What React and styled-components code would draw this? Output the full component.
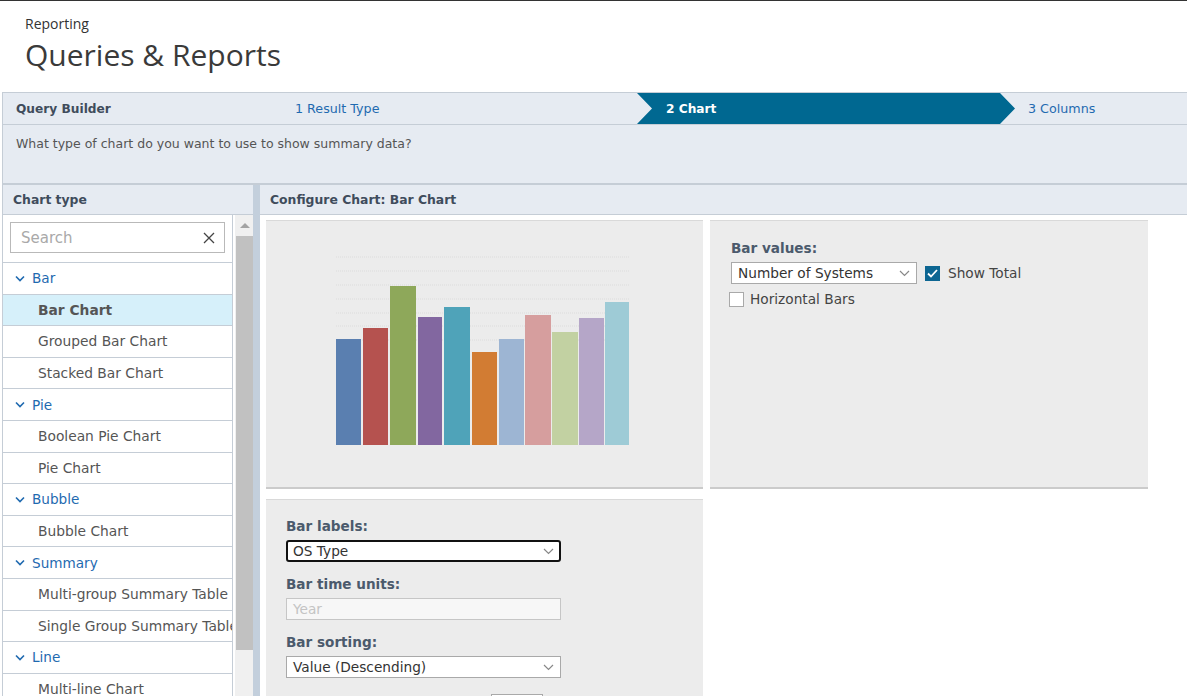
import React from "react"
import styled, { createGlobalStyle } from "styled-components"

const Global = createGlobalStyle`
  html, body { margin: 0; padding: 0; background: #fff; }
  body {
    font-family: "DejaVu Sans", Verdana, sans-serif;
    color: #444;
    overflow: hidden;
  }
  * { box-sizing: border-box; }
`

const Page = styled.div`
  width: 1187px;
  height: 696px;
  border-top: 1px solid #333;
  overflow: hidden;
`

const Header = styled.header`
  height: 91px;
  padding: 14px 0 0 25px;
  font-family: "Open Sans", sans-serif;
  color: #333;
`

const Crumb = styled.div`
  font-size: 14px;
  line-height: 18px;
`

const Title = styled.h1`
  margin: 2px 0 0;
  font-size: 30px;
  font-weight: 400;
  line-height: 40px;
  color: #3a3a3a;
`

const Builder = styled.div`
  margin-left: 2px;
  border-left: 1px solid #c5cdd6;
`

const Steps = styled.div`
  display: flex;
  height: 33px;
  background: #e6ebf2;
  border-top: 1px solid #c5cdd6;
  border-bottom: 1px solid #c5cdd6;
`

const Step = styled.div`
  flex: none;
  width: ${p => p.w}px;
  display: flex;
  align-items: center;
  padding-left: ${p => p.pl}px;
  color: ${p => (p.head ? "#3f4c5c" : p.active ? "#fff" : "#1f6ab0")};
  font-weight: ${p => (p.head || p.active ? 700 : 400)};
  font-size: ${p => (p.head || p.active ? 12.2 : 12.7)}px;
  background: ${p => (p.active ? "#006891" : "transparent")};
  clip-path: ${p =>
    p.active
      ? "polygon(0 0, calc(100% - 15px) 0, 100% 50%, calc(100% - 15px) 100%, 0 100%, 15px 50%)"
      : "none"};
`

const Question = styled.div`
  height: 60px;
  background: #e6ebf2;
  padding: 11px 0 0 13px;
  font-size: 12.5px;
  color: #555;
  border-bottom: 2px solid #c5cdd6;
`

const Split = styled.div`
  display: flex;
  height: 512px;
`

const LeftPane = styled.div`
  width: 250px;
  flex: none;
  display: flex;
  flex-direction: column;
`

const Splitter = styled.div`
  width: 7px;
  flex: none;
  background: #c3cfdc;
`

const RightPane = styled.div`
  flex: 1;
  display: flex;
  flex-direction: column;
`

const PaneTitle = styled.div`
  height: 30px;
  flex: none;
  background: #e6ebf2;
  border-bottom: 1px solid #c5cdd6;
  display: flex;
  align-items: center;
  padding-left: ${p => p.pl}px;
  font-size: 12.4px;
  font-weight: 700;
  color: #3f4c5c;
`

const ListArea = styled.div`
  flex: 1;
  display: flex;
  min-height: 0;
`

const ListCol = styled.div`
  width: 230px;
  flex: none;
  border-right: 1px solid #c5cdd6;
`

const SearchRow = styled.div`
  height: 48px;
  padding: 7px 0 0 7px;
  border-bottom: 1px solid #c5cdd6;
`

const SearchBox = styled.div`
  width: 215px;
  height: 31px;
  border: 1px solid #b9b9b9;
  display: flex;
  align-items: center;
  justify-content: space-between;
  padding: 0 9px 0 10px;
  font-size: 15px;
  color: #a9a9a9;
`

const Row = styled.div`
  height: 31.6px;
  border-bottom: 1px solid #c5cdd6;
  display: flex;
  align-items: center;
  gap: 7px;
  padding-left: ${p => (p.group ? 12 : 35)}px;
  font-size: ${p => (p.group ? 13.6 : 13.8)}px;
  white-space: nowrap;
  overflow: hidden;
  background: ${p => (p.sel ? "#d6f0fa" : "#fff")};
  color: ${p => (p.group ? "#1f6ab0" : "#555")};
  font-weight: ${p => (p.sel ? 700 : 400)};
`

const Scroll = styled.div`
  width: 19px;
  flex: none;
  background: #f0f0f0;
  display: flex;
  flex-direction: column;
  align-items: center;
  margin-left: 2px;
`

const ScrollArrow = styled.div`
  height: 21px;
  display: flex;
  align-items: center;
  &::before {
    content: "";
    border-left: 5px solid transparent;
    border-right: 5px solid transparent;
    border-bottom: 5px solid #a3a3a3;
  }
`

const Thumb = styled.div`
  width: 17px;
  height: 414px;
  background: #c1c1c1;
`

const Cards = styled.div`
  display: grid;
  grid-template-columns: 437px 438px;
  grid-auto-rows: 269px;
  column-gap: 7px;
  row-gap: 10px;
  padding: 5px 0 0 6px;
`

const Card = styled.div`
  background: #ececec;
  border-top: 1px solid #d9d9d9;
  border-bottom: 2px solid #cbcbcb;
  padding: ${p => p.pad || "0"};
`

const Label = styled.div`
  font-size: 13.6px;
  font-weight: 700;
  color: #4b5a6c;
  margin: ${p => p.mt || 0}px 0 6px;
`

const Select = styled.div`
  width: ${p => p.w}px;
  height: 22px;
  background: ${p => (p.disabled ? "#f7f7f7" : "#fff")};
  border: ${p => (p.focus ? "2px solid #111" : "1px solid #a9a9a9")};
  border-color: ${p => (p.disabled ? "#c6c6c6" : undefined)};
  border-radius: ${p => (p.focus ? 3 : 0)}px;
  display: flex;
  align-items: center;
  justify-content: space-between;
  padding: 0 ${p => (p.focus ? 5 : 6)}px;
  font-size: 13.7px;
  color: ${p => (p.disabled ? "#c4c4c4" : "#333")};
`

const InlineRow = styled.div`
  display: flex;
  align-items: center;
  gap: ${p => p.gap || 8}px;
  margin-left: ${p => p.ml || 0}px;
  margin-top: ${p => p.mt || 0}px;
`

const Box = styled.span`
  width: 15px;
  height: 15px;
  flex: none;
  display: inline-flex;
  align-items: center;
  justify-content: center;
  background: ${p => (p.on ? "#0d6692" : "#fff")};
  border: 1px solid ${p => (p.on ? "#0d6692" : "#a9a9a9")};
`

const CheckText = styled.span`
  font-size: 13.7px;
  color: #444;
`

const Stub = styled.div`
  width: 52px;
  height: 10px;
  margin: 16px 0 0 205px;
  border: 1px solid #a9a9a9;
  border-bottom: none;
  background: #fff;
`

const Chevron = ({ color = "#888" }) => (
  <svg width="11" height="7" viewBox="0 0 11 7">
    <path d="M1 1l4.5 4.5L10 1" fill="none" stroke={color} strokeWidth="1.2" />
  </svg>
)

const GroupChevron = () => (
  <svg width="10" height="7" viewBox="0 0 10 7">
    <path d="M1 1.5l4 4 4-4" fill="none" stroke="#1f6ab0" strokeWidth="1.6" />
  </svg>
)

const bars = [
  { x: 336, w: 25, top: 339, c: "#5a7fb0" },
  { x: 363, w: 25, top: 328, c: "#b5524f" },
  { x: 390, w: 26, top: 286, c: "#8ea85a" },
  { x: 418, w: 24, top: 317, c: "#8267a0" },
  { x: 444, w: 26, top: 307, c: "#4fa3b9" },
  { x: 472, w: 25, top: 352, c: "#d27c33" },
  { x: 499, w: 25, top: 339, c: "#9db5d3" },
  { x: 525, w: 26, top: 315, c: "#d69e9e" },
  { x: 552, w: 26, top: 332, c: "#c2d1a2" },
  { x: 579, w: 25, top: 318, c: "#b5a6c8" },
  { x: 605, w: 24, top: 302, c: "#9ecbd6" },
]

const BarPreview = () => (
  <svg width="437" height="266" viewBox="266 221 437 266">
    {[257, 271, 285, 299, 313, 326, 340].map(y => (
      <line key={y} x1="336" x2="629" y1={y} y2={y} stroke="#dcdcdc" strokeDasharray="1 1" />
    ))}
    {bars.map(b => (
      <rect key={b.x} x={b.x} y={b.top} width={b.w} height={445 - b.top} fill={b.c} />
    ))}
  </svg>
)

const items = [
  { t: "Bar", g: true },
  { t: "Bar Chart", sel: true },
  { t: "Grouped Bar Chart" },
  { t: "Stacked Bar Chart" },
  { t: "Pie", g: true },
  { t: "Boolean Pie Chart" },
  { t: "Pie Chart" },
  { t: "Bubble", g: true },
  { t: "Bubble Chart" },
  { t: "Summary", g: true },
  { t: "Multi-group Summary Table" },
  { t: "Single Group Summary Table" },
  { t: "Line", g: true },
  { t: "Multi-line Chart" },
]

export default function App() {
  return (
    <Page>
      <Global />
      <Header>
        <Crumb>Reporting</Crumb>
        <Title>Queries &amp; Reports</Title>
      </Header>
      <Builder>
        <Steps>
          <Step head w={277} pl={13}>Query Builder</Step>
          <Step w={357} pl={15}>1 Result Type</Step>
          <Step active w={378} pl={29}>2 Chart</Step>
          <Step w={170} pl={13}>3 Columns</Step>
        </Steps>
        <Question>What type of chart do you want to use to show summary data?</Question>
        <Split>
          <LeftPane>
            <PaneTitle pl={10}>Chart type</PaneTitle>
            <ListArea>
              <ListCol>
                <SearchRow>
                  <SearchBox>
                    <span>Search</span>
                    <svg width="12" height="12" viewBox="0 0 12 12">
                      <path d="M1 1l10 10M11 1L1 11" stroke="#444" strokeWidth="1.3" />
                    </svg>
                  </SearchBox>
                </SearchRow>
                {items.map(it => (
                  <Row key={it.t} group={it.g} sel={it.sel}>
                    {it.g && <GroupChevron />}
                    {it.t}
                  </Row>
                ))}
              </ListCol>
              <Scroll>
                <ScrollArrow />
                <Thumb />
              </Scroll>
            </ListArea>
          </LeftPane>
          <Splitter />
          <RightPane>
            <PaneTitle pl={10}>Configure Chart: Bar Chart</PaneTitle>
            <Cards>
              <Card>
                <BarPreview />
              </Card>
              <Card pad="19px 0 0 21px">
                <Label>Bar values:</Label>
                <InlineRow>
                  <Select w={186}>
                    <span>Number of Systems</span>
                    <Chevron />
                  </Select>
                  <Box on>
                    <svg width="11" height="9" viewBox="0 0 11 9">
                      <path d="M1 4.5l3 3L10 1" fill="none" stroke="#fff" strokeWidth="1.8" />
                    </svg>
                  </Box>
                  <CheckText>Show Total</CheckText>
                </InlineRow>
                <InlineRow ml={-2} mt={7} gap={6}>
                  <Box />
                  <CheckText>Horizontal Bars</CheckText>
                </InlineRow>
              </Card>
              <Card pad="18px 0 0 20px">
                <Label>Bar labels:</Label>
                <Select w={275} focus>
                  <span>OS Type</span>
                  <Chevron />
                </Select>
                <Label mt={14}>Bar time units:</Label>
                <Select w={275} disabled>
                  <span>Year</span>
                </Select>
                <Label mt={14}>Bar sorting:</Label>
                <Select w={275}>
                  <span>Value (Descending)</span>
                  <Chevron />
                </Select>
                <Stub />
              </Card>
            </Cards>
          </RightPane>
        </Split>
      </Builder>
    </Page>
  )
}
